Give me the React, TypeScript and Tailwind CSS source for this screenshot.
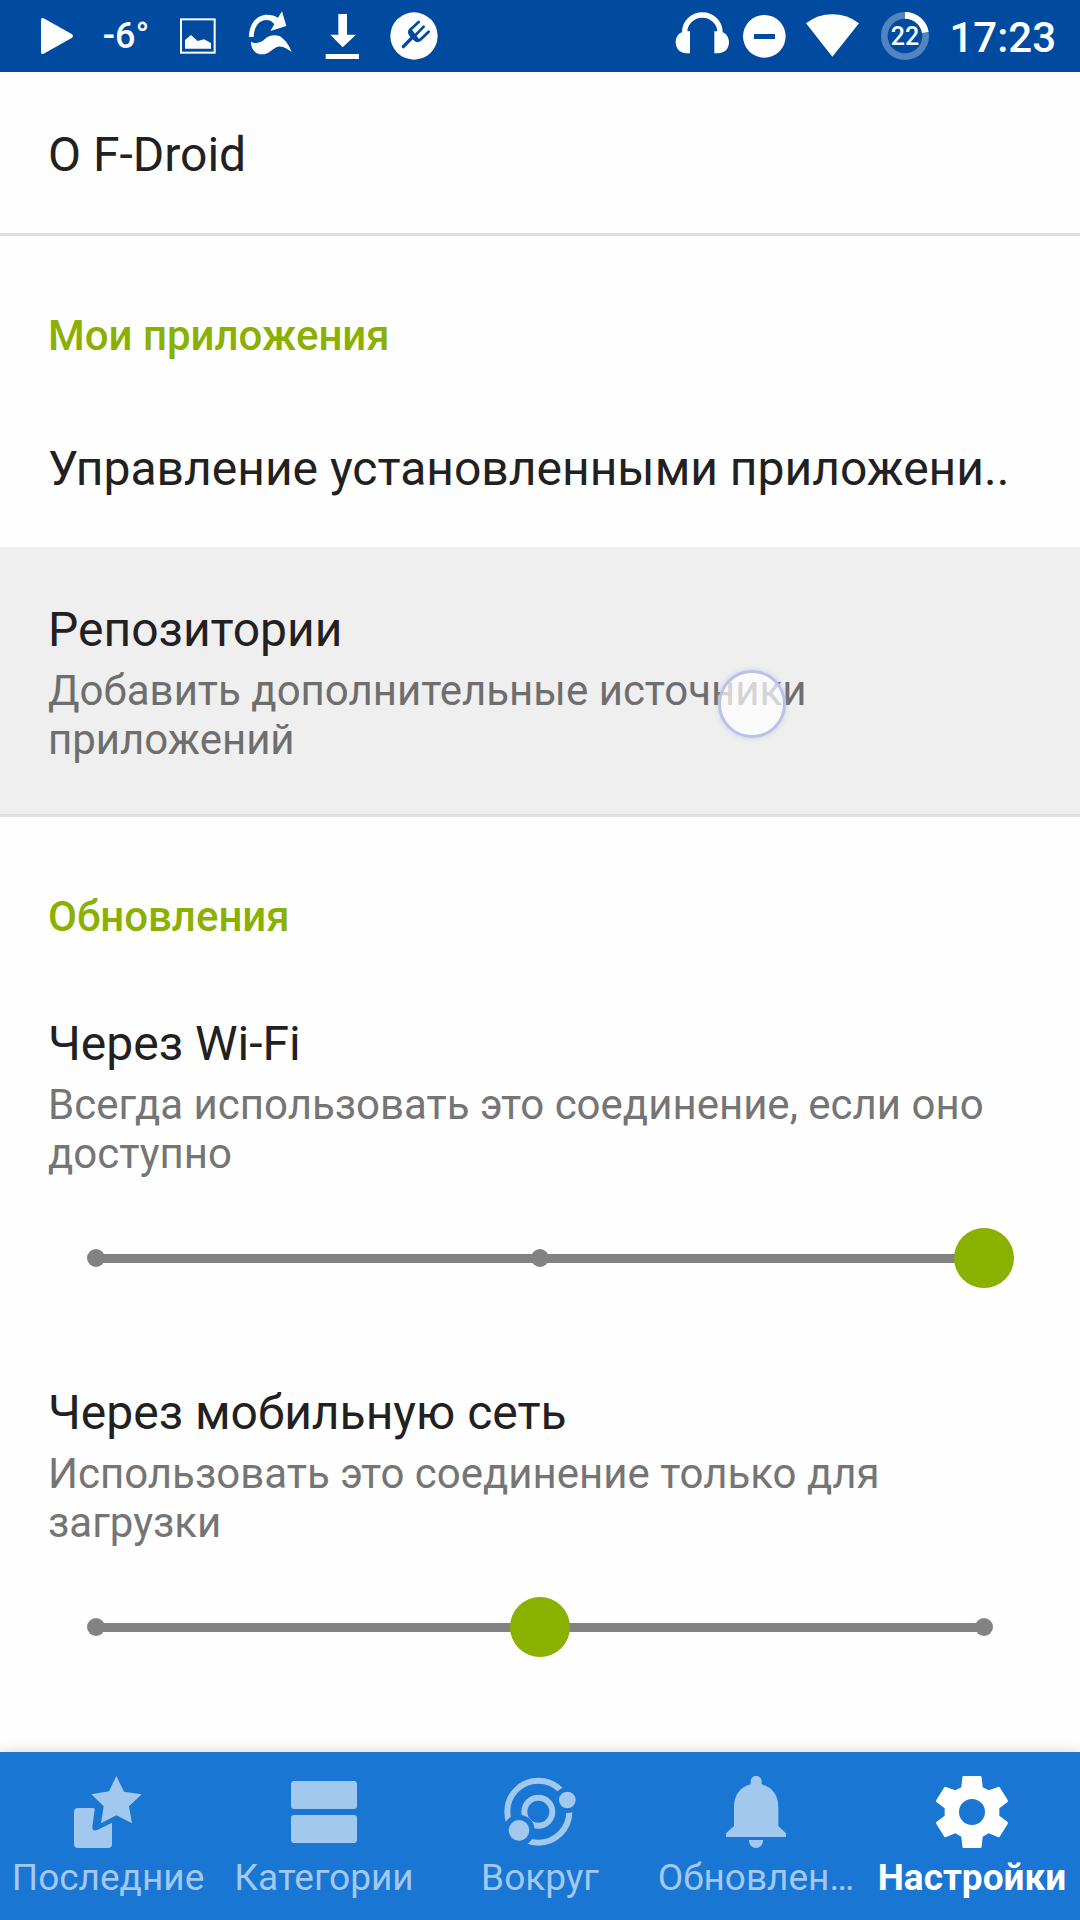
import React, { useState } from "react";

type IconProps = { children: React.ReactNode };

function Icon({ children }: IconProps) {
  return (
    <svg viewBox="0 0 216 216" className="size-[72px] shrink-0" fill="currentColor" aria-hidden="true">
      {children}
    </svg>
  );
}

function StatusBar() {
  return (
    <header className="flex h-[72px] shrink-0 items-center justify-between bg-[#004a9f] pr-6 pl-[18px] font-medium text-white">
      <div className="flex items-center">
        <Icon>
          <path d="M69 60q0-9 8-5l84 47q8 6 0 12l-84 47q-8 4-8-5z" />
        </Icon>
        <span className="w-[72px] text-center text-[36px] leading-[42px]">-6°</span>
        <Icon>
          <rect x="57" y="58" width="101" height="100" fill="none" stroke="currentColor" strokeWidth="6" />
          <path d="M69 120 87 105 107 123 126 118 147 129V146H69z" />
        </Icon>
        <Icon>
          <path d="M45 111C45 70 70 44 99 44Q118 44 132 53L144 34 157 78 109 93 121 73Q112 60 97 60C76 60 60 80 59 111z" />
          <path d="M51 125C60 131 78 132 92 118C104 105 128 101 144 113C158 124 166 138 173 156C160 146 146 137 132 140C114 145 106 163 84 163C64 162 50 148 51 125z" />
        </Icon>
        <Icon>
          <path d="M97 42H123V104H150L110 142 73 104H97zM59 162H159V177H59z" />
        </Icon>
        <Icon>
          <circle cx="108" cy="108" r="71" />
          <g fill="none" stroke="#004a9f" strokeLinecap="round" strokeLinejoin="round">
            <path d="M122 66 96 90Q91 96 98 106L110 118Q118 126 127 119L152 95M137 80 108 110" strokeWidth="8" />
            <path d="M100 92 120 118 108 114 98 104z" fill="#004a9f" strokeWidth="6" />
            <path d="M76 140 103 112" strokeWidth="10" />
          </g>
        </Icon>
      </div>
      <div className="flex items-center">
        <svg viewBox="0 0 198 216" className="h-[72px] w-[66px] shrink-0" fill="currentColor" aria-hidden="true">
          <path d="M44 96A53 51 0 0 1 150 96" fill="none" stroke="currentColor" strokeWidth="16" />
          <path d="M60 94H50C28 94 17 110 17 127S28 160 50 160H60zM133 94H143C166 94 177 110 177 127S166 160 143 160H133z" />
        </svg>
        <svg viewBox="0 0 180 216" className="h-[72px] w-[60px] shrink-0" fill="currentColor" aria-hidden="true">
          <circle cx="85" cy="109" r="64" />
          <path d="M54 102H117V117H54z" fill="#004a9f" />
        </svg>
        <Icon>
          <path d="M30 70Q64 43 109 43T189 70L109 170z" />
        </Icon>
        <Icon>
          <circle cx="111" cy="108" r="62" fill="none" stroke="currentColor" strokeWidth="20" opacity=".32" />
          <path d="M111 46A62 62 0 0 1 172 97" fill="none" stroke="currentColor" strokeWidth="20" />
          <text x="111" y="134" textAnchor="middle" fontSize="75">
            22
          </text>
        </Icon>
        <time className="ml-[9px] pt-0.5 text-[42px] leading-[49px]">17:23</time>
      </div>
    </header>
  );
}

function Category({ children }: IconProps) {
  return (
    <h2 className="px-12 pt-[75px] pb-[26px] text-[42px] leading-[49px] font-medium text-[#8ab000]">{children}</h2>
  );
}

function Preference({ title, summary, pressed }: { title: string; summary?: string; pressed?: boolean }) {
  return (
    <button
      type="button"
      className={`block w-full px-12 pt-[55px] pb-[50px] text-left ${pressed ? "bg-[#efefef]" : ""}`}
    >
      <span className="block truncate text-[48px] leading-[56px]">{title}</span>
      {summary && (
        <span className={`mt-2 block text-[42px] leading-[49px] ${pressed ? "text-[#6e6e6e]" : "text-[#757575]"}`}>
          {summary}
        </span>
      )}
    </button>
  );
}

function SliderPreference({
  id,
  title,
  summary,
  initial,
}: {
  id: string;
  title: string;
  summary: string;
  initial: number;
}) {
  const [value, setValue] = useState(initial);
  return (
    <div className="pt-[49px] pb-12">
      <div className="px-12">
        <label htmlFor={id} className="block text-[48px] leading-[56px]">
          {title}
        </label>
        <p className="mt-2 text-[42px] leading-[49px] text-[#757575]">{summary}</p>
      </div>
      <div className="mx-[66px] mt-[50px] grid items-center">
        <div className="col-start-1 row-start-1 mx-[30px] h-[9px] bg-[#828282]" />
        <div className="col-start-1 row-start-1 mx-[21px] flex justify-between">
          <i className="size-[18px] rounded-full bg-[#828282]" />
          <i className="size-[18px] rounded-full bg-[#828282]" />
          <i className="size-[18px] rounded-full bg-[#828282]" />
        </div>
        <input
          id={id}
          type="range"
          min={0}
          max={2}
          step={1}
          value={value}
          onChange={(e) => setValue(Number(e.target.value))}
          className="z-10 col-start-1 row-start-1 h-[60px] w-full appearance-none bg-transparent [&::-webkit-slider-thumb]:size-[60px] [&::-webkit-slider-thumb]:appearance-none [&::-webkit-slider-thumb]:rounded-full [&::-webkit-slider-thumb]:bg-[#8ab000]"
        />
      </div>
    </div>
  );
}

const tabs = [
  {
    label: "Последние",
    icon: (
      <path d="M133 0 156 47 209 55 171 91 180 142 133 118 87 142 95 91 58 55 111 46zM18 96H64Q69 96 68 101L61 152Q60 167 76 162L120 140V204Q120 216 108 216H18Q6 216 6 204V108Q6 96 18 96z" />
    ),
  },
  {
    label: "Категории",
    icon: (
      <>
        <rect x="9" y="15" width="198" height="84" rx="9" />
        <rect x="9" y="117" width="198" height="84" rx="9" />
      </>
    ),
  },
  {
    label: "Вокруг",
    icon: (
      <>
        <mask id="orbit-gaps">
          <rect width="216" height="216" fill="#fff" />
          <circle cx="190" cy="72" r="39" fill="#000" />
          <circle cx="45" cy="163" r="47" fill="#000" />
        </mask>
        <g mask="url(#orbit-gaps)" fill="none" stroke="currentColor" strokeWidth="18">
          <circle cx="103" cy="107" r="93" />
          <circle cx="103" cy="107" r="42" />
        </g>
        <circle cx="190" cy="72" r="25" />
        <circle cx="45" cy="163" r="31" />
      </>
    ),
  },
  {
    label: "Обновлен…",
    icon: (
      <path d="M92 25V16A16 16 0 0 1 125 16V25C157 32 175 59 175 92V150L198 172V183H18V172L42 150V92C42 59 60 32 92 25zM86 192H130Q126 216 108 216T86 192z" />
    ),
  },
  {
    label: "Настройки",
    icon: (
      <path
        fillRule="evenodd"
        d="M84 0H132Q136 0 137 4L140 34 158 43 186 33Q190 31 192 35L215 72Q217 76 214 79L190 97V119L214 137Q217 140 215 144L192 181Q190 185 186 183L158 172 140 182 137 212Q136 216 132 216H84Q80 216 79 212L76 182 58 172 30 183Q26 185 24 181L1 144Q-1 140 2 137L26 119V97L2 79Q-1 76 1 72L24 35Q26 31 30 33L58 43 76 34 79 4Q80 0 84 0zM108 69A39 39 0 1 0 108 147 39 39 0 1 0 108 69z"
      />
    ),
  },
];

function BottomNav() {
  return (
    <nav className="sticky bottom-0 z-20 grid shrink-0 grid-cols-5 bg-[#1976d2] text-white shadow-[0_0_14px_rgba(0,0,0,0.16)]">
      {tabs.map((tab) => {
        const active = tab.label === "Настройки";
        return (
          <button
            key={tab.label}
            type="button"
            aria-current={active ? "page" : undefined}
            className={`flex min-w-0 flex-col items-center pt-6 pb-5 ${active ? "font-bold" : "text-[#a3c8ed]"}`}
          >
            <Icon>{tab.icon}</Icon>
            <span className="mt-2 text-[37px] leading-[44px] whitespace-nowrap">{tab.label}</span>
          </button>
        );
      })}
    </nav>
  );
}

export default function App() {
  return (
    <div className="flex min-h-screen flex-col bg-[#fefefe] font-[Roboto,sans-serif] text-[#212121]">
      <StatusBar />
      <main className="flex-1">
        <Preference title="О F-Droid" />
        <section className="border-t-[3px] border-[#dfdfdf]">
          <Category>Мои приложения</Category>
          <Preference title="Управление установленными приложени.." />
          <div className="relative">
            <Preference pressed title="Репозитории" summary="Добавить дополнительные источники приложений" />
            <span className="pointer-events-none absolute top-[123px] left-[718px] size-[68px] rounded-full border-[3px] border-[#bcc2e6] bg-white/70 shadow-[0_0_5px_rgba(170,178,228,0.6)]" />
          </div>
        </section>
        <section className="border-t-[3px] border-[#dfdfdf]">
          <Category>Обновления</Category>
          <SliderPreference
            id="over-wifi"
            title="Через Wi-Fi"
            summary="Всегда использовать это соединение, если оно доступно"
            initial={2}
          />
          <SliderPreference
            id="over-mobile"
            title="Через мобильную сеть"
            summary="Использовать это соединение только для загрузки"
            initial={1}
          />
        </section>
      </main>
      <BottomNav />
    </div>
  );
}
